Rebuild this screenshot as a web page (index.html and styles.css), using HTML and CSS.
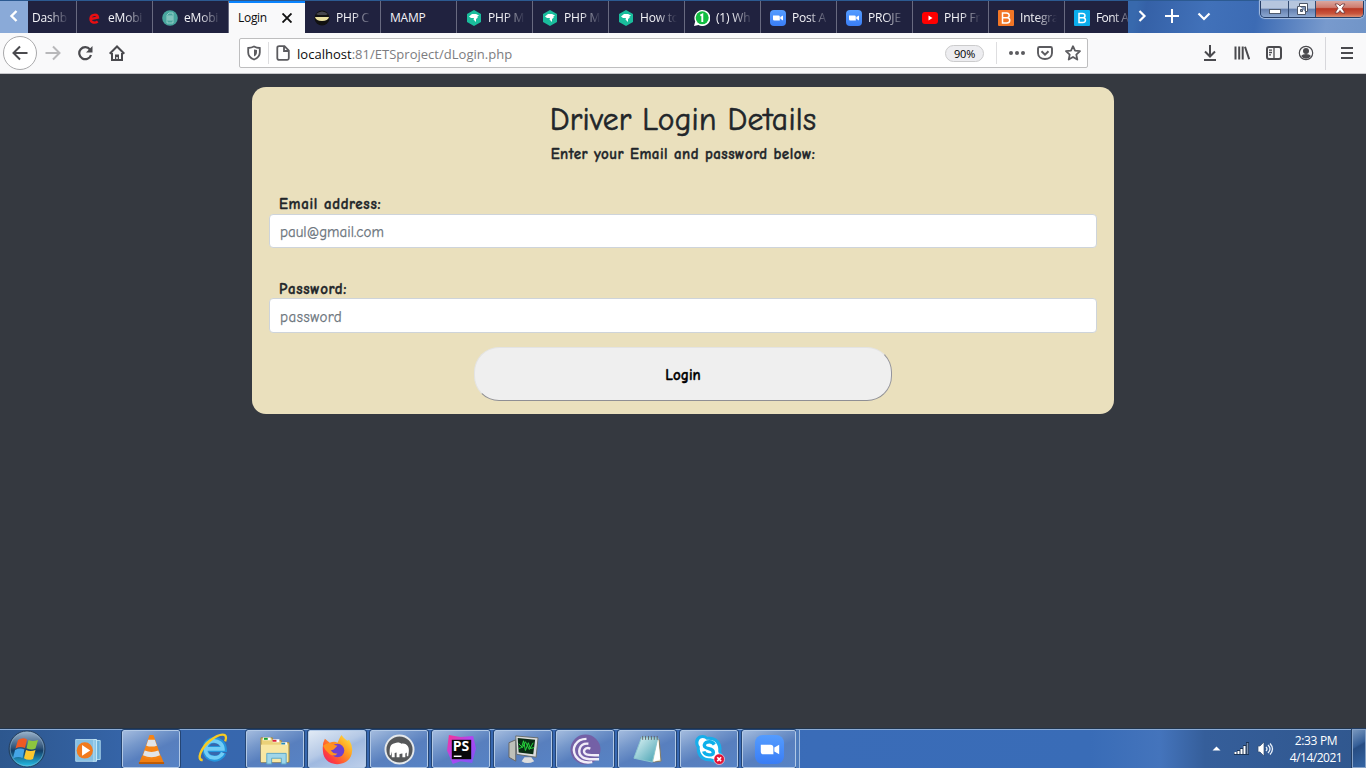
FILE: index.html
```html
<!DOCTYPE html>
<html lang="en">
<head>
<meta charset="utf-8">
<title>Login</title>
<link rel="stylesheet" href="styles.css">
</head>
<body>
<svg class="defs" width="0" height="0">
  <defs>
    <linearGradient id="zoomg" x2="0" y2="1"><stop stop-color="#549cff"/><stop offset="1" stop-color="#3a7df5"/></linearGradient>
    <linearGradient id="orb" x2="0" y2="1"><stop stop-color="#9db5cc"/><stop offset=".45" stop-color="#34577c"/><stop offset=".55" stop-color="#123e68"/><stop offset="1" stop-color="#25c5ec"/></linearGradient>
    <linearGradient id="fox" x1="1" x2="0" y2="1"><stop stop-color="#fff04a"/><stop offset=".4" stop-color="#ff9a1f"/><stop offset=".75" stop-color="#ff403d"/><stop offset="1" stop-color="#e2187d"/></linearGradient>
    <linearGradient id="psg" x2="1" y2="1"><stop stop-color="#ff318c"/><stop offset=".45" stop-color="#b345f1"/><stop offset="1" stop-color="#765af8"/></linearGradient>
    <linearGradient id="note" x2="1" y2="1"><stop stop-color="#e4f7f8"/><stop offset="1" stop-color="#429fb0"/></linearGradient>
    <symbol id="hex" viewBox="0 0 16 16"><path d="M8 0l7 4v8l-7 4-7-4V4z" fill="#1abc9c"/><path d="M3 6.500l3-2.500h4l3 1.500-2 1.500 1 .5-2 1.500v3L7.500 9.500 8 8H5z" fill="#fff"/></symbol>
    <symbol id="zoomi" viewBox="0 0 16 16"><rect width="16" height="16" rx="4" fill="url(#zoomg)"/><path d="M3 5.500h5.500q1.300 0 1.300 1.200v3.800H4.300Q3 10.500 3 9.300zM10.300 7.100L13 5.400v5.100l-2.700-1.700z" fill="#fff"/></symbol>
  </defs>
</svg>
<header class="tabbar">
  <div class="scroll-left"><svg width="10" height="14" viewBox="0 0 10 14"><path d="M7.500 2L2.500 7l5 5" fill="none" stroke="#fff" stroke-width="2.400"/></svg></div>
  <nav class="tabs">
    <div class="tab first"><span class="fade">Dashb</span></div>
    <div class="tab"><svg class="fav" viewBox="0 0 16 16"><path d="M4.500 9L12 7.600C11.500 3.500 4.700 4 4.500 8.700c0 4.600 5 4.600 7.200 2.800" fill="none" stroke="#e80e12" stroke-width="2.400"/></svg><span class="fade">eMobi</span></div>
    <div class="tab"><svg class="fav" viewBox="0 0 16 16"><circle cx="8" cy="8" r="7.800" fill="#48a59d"/><path d="M5 13V5l2-2h4v10zM7 5v6m2-6v6M5 7h6m-6 2h6" fill="none" stroke="#9bd0ca" stroke-width=".9"/></svg><span class="fade">eMobi</span></div>
    <div class="tab active"><span>Login</span><svg width="10" height="10" viewBox="0 0 10 10"><path d="M.5.5l9 9m0-9l-9 9" stroke="#111" stroke-width="1.900"/></svg></div>
    <div class="tab"><svg class="fav" viewBox="0 0 16 16"><circle cx="8" cy="8" r="7.500" fill="#111"/><path d="M2 4Q8-1 14 4L12 5H4z" fill="#45454c"/><path d="M1 7h14q-1 4-7 4T1 7z" fill="#e9dfa0"/></svg><span class="fade">PHP C</span></div>
    <div class="tab"><span class="plain">MAMP</span></div>
    <div class="tab"><svg class="fav"><use href="#hex"/></svg><span class="fade">PHP M</span></div>
    <div class="tab"><svg class="fav"><use href="#hex"/></svg><span class="fade">PHP M</span></div>
    <div class="tab"><svg class="fav"><use href="#hex"/></svg><span class="fade">How to</span></div>
    <div class="tab"><svg class="fav" viewBox="0 0 16 16"><path d="M0 16l1.200-4.500A8 8 0 1 1 4.500 15z" fill="#fff"/><circle cx="8.200" cy="7.800" r="6.500" fill="#12bd41"/><path d="M6.300 5.500l2-1V12" fill="none" stroke="#fff" stroke-width="1.900"/></svg><span class="fade">(1) Wh</span></div>
    <div class="tab"><svg class="fav"><use href="#zoomi"/></svg><span class="fade">Post A</span></div>
    <div class="tab"><svg class="fav"><use href="#zoomi"/></svg><span class="fade">PROJE</span></div>
    <div class="tab"><svg class="fav" viewBox="0 0 16 16"><rect y="2" width="16" height="12" rx="3" fill="#f00"/><path d="M6.500 5.500v5l4-2.500z" fill="#fff"/></svg><span class="fade">PHP Fr</span></div>
    <div class="tab"><svg class="fav" viewBox="0 0 16 16"><rect width="16" height="16" rx="1" fill="#f37626"/><path d="M4.500 3v10h4.200c4 0 4-5 .4-5.200C12 7.500 12 3 8.500 3zM4.500 7.800H9" fill="none" stroke="#fff" stroke-width="1.500"/></svg><span class="fade">Integra</span></div>
    <div class="tab last"><svg class="fav" viewBox="0 0 16 16"><rect width="16" height="16" rx="1" fill="#0badec"/><path d="M5 3.500v9h3.700c3.600 0 3.600-4.500.4-4.700 2.600-.3 2.600-4.300-.6-4.300zM5 7.800h4" fill="none" stroke="#fff" stroke-width="1.500"/></svg><span class="fade">Font A</span></div>
  </nav>
  <div class="tab-tools">
    <svg width="10" height="14" viewBox="0 0 10 14"><path d="M2.500 2l5 5-5 5" fill="none" stroke="#fff" stroke-width="2.200"/></svg>
    <svg width="14" height="14" viewBox="0 0 14 14"><path d="M7 0v14M0 7h14" stroke="#fff" stroke-width="2"/></svg>
    <svg width="14" height="14" viewBox="0 0 14 14"><path d="M1.500 4.500L7 10l5.500-5.500" fill="none" stroke="#fff" stroke-width="2.200"/></svg>
  </div>
  <div class="winbtns">
    <div class="wb"><svg width="14" height="14"><rect x="1.500" y="7.500" width="11" height="4" fill="#fff" stroke="#505c6e"/></svg></div>
    <div class="wb mid"><svg width="14" height="14"><path d="M4.500 1.500h8v8h-2v3h-8v-8h2z" fill="#fff" stroke="#4c5667"/><path d="M5.500 7.500h2v2h-2zM5 4.500h5.500V10" fill="#8194b5" stroke="#4c5667"/></svg></div>
    <div class="wb close"><svg width="14" height="14"><path d="M2 2h3l2 2 2-2h3L9 6.300 12 11H9L7 8.500 5 11H2l3-4.700z" fill="#fff" stroke="#6b3638" stroke-width=".8"/></svg></div>
  </div>
</header>
<div class="toolbar">
  <div class="back"><svg width="16" height="16" viewBox="0 0 16 16"><path d="M15.500 8H1.500M8 1.500L1.500 8 8 14.500" fill="none" stroke="#4a4a4e" stroke-width="2"/></svg></div>
  <svg class="ic fwd" viewBox="0 0 16 16"><path d="M.5 8h14M8 1.500L14.500 8 8 14.500" fill="none" stroke="#b8b8ba" stroke-width="2"/></svg>
  <svg class="ic reload" viewBox="0 0 16 16"><path d="M13 4.500A6 6 0 1 0 14 10" fill="none" stroke="#4a4a4e" stroke-width="2.200"/><path d="M15.500 1v6.500H9z" fill="#4a4a4e"/></svg>
  <svg class="ic home" viewBox="0 0 16 16"><path d="M.7 8.700L8 1.500l7.300 7.200M3 8v7h10V8" fill="none" stroke="#4a4a4e" stroke-width="2"/><path d="M6 15V9.500h4V15H8.700v-3H7.300v3z" fill="#4a4a4e"/></svg>
  <div class="urlbar">
    <svg class="shield" viewBox="0 0 14 16"><path d="M7 1.500C5 2.600 3 2.900 1.200 3v4.500c0 3.500 2 5.500 5.800 7 3.800-1.500 5.800-3.500 5.800-7V3C11 2.900 9 2.600 7 1.500z" fill="none" stroke="#5b5b5f" stroke-width="1.800"/><path d="M7 4.500v7c2-1 3-2.300 3-4.500V5z" fill="#5b5b5f"/></svg>
    <i class="sep s1"></i>
    <svg class="doc" viewBox="0 0 14 16"><path d="M3.200 1.200H8.500l4.300 4.300v7.800q0 1.500-1.500 1.500h-8q-2 0-2-1.500V2.700q0-1.500 1.900-1.500zM8 1v5h5" fill="none" stroke="#5b5b5f" stroke-width="1.800"/></svg>
    <span class="url"><b>localhost</b>:81/ETSproject/dLogin.php</span>
    <span class="pct">90%</span>
    <i class="sep s2"></i>
    <svg class="dots" viewBox="0 0 16 16"><g fill="#5b5b5f"><circle cx="2" cy="8" r="2"/><circle cx="8" cy="8" r="2"/><circle cx="14" cy="8" r="2"/></g></svg>
    <svg class="ub" viewBox="0 0 16 16"><path d="M2.500 2h11Q15 2 15 3.500V8c0 8-14 8-14 0V3.500Q1 2 2.500 2z" fill="none" stroke="#5b5b5f" stroke-width="1.900"/><path d="M4.500 6.300L8 9.700l3.500-3.400" fill="none" stroke="#5b5b5f" stroke-width="2"/></svg>
    <svg class="ub" viewBox="0 0 16 16"><path d="M8 1.200l2 4.500 5 .5-3.700 3.400 1 5L8 12l-4.300 2.600 1-5L1 6.200l5-.5z" fill="none" stroke="#5b5b5f" stroke-width="1.800" stroke-linejoin="round"/></svg>
  </div>
  <div class="right">
    <svg class="ic" viewBox="0 0 16 16"><path d="M8 0v11M3 6.500l5 5 5-5M2 15h12" fill="none" stroke="#4a4a4e" stroke-width="2"/></svg>
    <svg class="ic" viewBox="0 0 16 16"><path d="M1.500 1.500v13M5.200 1.500v13M8.700 1.500v13M11 1.800l4.200 12.500" fill="none" stroke="#4a4a4e" stroke-width="2"/></svg>
    <svg class="ic" viewBox="0 0 16 16"><rect x="1" y="2" width="14" height="12" rx="2" fill="none" stroke="#4a4a4e" stroke-width="2"/><path d="M8 2v12M3 5.200h3M3 7.500h3M3 9.800h2" stroke="#4a4a4e" stroke-width="1.300"/></svg>
    <svg class="ic" viewBox="0 0 16 16"><circle cx="8" cy="8" r="6.700" fill="none" stroke="#4a4a4e" stroke-width="1.200"/><circle cx="8" cy="6" r="3" fill="#4a4a4e"/><path d="M3 11q1.500-2 5-2t5 2q-2 2.700-5 2.700T3 11z" fill="#4a4a4e"/></svg>
    <i class="rsep"></i>
    <svg class="ic menu" viewBox="0 0 16 16"><path d="M2 3h12M2 8h12M2 13h12" stroke="#4a4a4e" stroke-width="2"/></svg>
  </div>
</div>
<main class="page">
  <form class="card">
    <h1>Driver Login Details</h1>
    <p class="sub">Enter your Email and password below:</p>
    <label class="l-email" for="em">Email address:</label>
    <input id="em" class="i-email" type="email" placeholder="paul@gmail.com">
    <label class="l-pass" for="pw">Password:</label>
    <input id="pw" class="i-pass" type="password" placeholder="password">
    <button type="button">Login</button>
  </form>
</main>
<footer class="taskbar">
  <div class="start"><svg width="38" height="38" viewBox="0 0 38 38"><circle cx="19" cy="19" r="18" fill="url(#orb)" stroke="#263f5c"/><circle cx="19" cy="19" r="16.800" fill="none" stroke="#8fb2cf" stroke-opacity=".55"/><path d="M10 10q5-3 9-.5l-2 8.500q-5-2-9.500.5z" fill="#ee5a24"/><path d="M20.500 10q4 2 9.500 0l-2.500 8.500q-4 2-9-.3z" fill="#8cc63f"/><path d="M7 20q5-2.500 9.500-.5l-2 8.500Q10 26 5 28.500z" fill="#45a5e6"/><path d="M18 20q4.500 2 9.500 0l-2.500 9q-5 2-9-.7z" fill="#fcc72e"/></svg></div>
  <div class="task flat wmp"><svg class="ti" viewBox="0 0 32 32"><path d="M25 6h5v21h-5z" fill="#6cb0d9" stroke="#b8e1f4"/><path d="M22 5h4v24h-4z" fill="#8ac5e6" stroke="#d2effa"/><path d="M3 5h20v24H3z" fill="#85bfe2" stroke="#b7dcef"/><circle cx="13" cy="17" r="9" fill="#f17a1d"/><path d="M10 11v12l9-6z" fill="#fff"/></svg></div>
  <div class="task"><svg class="ti" viewBox="0 0 32 32"><path d="M6 23h20l3 7.500H3z" fill="#f07f13"/><path d="M14 1h4l8 23q-10 4.500-20 0z" fill="#f68415"/><path d="M12.600 6h6.800l2.200 6q-5.500 2-11 0zM9 17q7 3 14 0l1.800 5q-9 4-17.600 0z" fill="#e2e5e8"/><path d="M3 30h26" stroke="#bd5a05" stroke-width="2"/></svg></div>
  <div class="task flat ie"><svg class="ti" viewBox="0 0 32 32"><path d="M8 17h19.500C27 5 8 4 8 17c0 13 16 13 19 4" fill="none" stroke="#2495dd" stroke-width="6.500"/><path d="M8 17h18.500C26 6 8 5 8 17c0 11.500 15 12 18.500 4" fill="none" stroke="#71cdf6" stroke-width="4"/><path d="M5 29C-2 29 3 16 13 8s20-9 16 1" fill="none" stroke="#f7cb22" stroke-width="2.500"/></svg></div>
  <div class="task"><svg class="ti" viewBox="0 0 32 32"><path d="M1 4h12v3h9v2h8v20H1z" fill="#ead179" stroke="#a98a38"/><path d="M3 5h8M13 7h7M22 10h6" stroke="#fff" stroke-width="3"/><path d="M4 5h4" stroke="#1aa12c" stroke-width="2"/><path d="M13 7h4" stroke="#d23" stroke-width="2"/><path d="M22 10h4" stroke="#28b" stroke-width="2"/><path d="M1 11h28v18H1z" fill="#f8e7a3"/><path d="M7 20h20v11h-5v-6H12v6H7z" fill="#9fd6ea" stroke="#5ba7c8"/></svg></div>
  <div class="task lit"><svg class="ti" viewBox="0 0 32 32"><path d="M3 5l5 4q5-2 8 0 2-5 4-8 2 3 6 6l2-1q4 7 3 12c-1 17-29 18-30 0Q0 10 3 5z" fill="url(#fox)"/><circle cx="16" cy="17" r="7" fill="#6c41d0"/><path d="M1 12q6-5 11-1l4 1-4 4-3 1q3 4 7 3-3 4-8 1-5-4-7-9z" fill="#ff9220"/></svg></div>
  <div class="task"><svg class="ti" viewBox="0 0 32 32"><circle cx="16" cy="16" r="14.500" fill="#555759" stroke="#e4e8eb" stroke-width="2"/><path d="M6 22c-.5-7 0-12 5-12.500 3-1.500 6-.5 7 .5 6-1 8.500 4 7.500 9l-.5 4h-1.500v-4l-1.500 1v4h-3v-4q-2 0-3 1v3h-3v-5l-2 .5v4.500H8v-6l-1 4z" fill="#fff"/></svg></div>
  <div class="task"><svg class="ti" viewBox="0 0 32 32"><path d="M3 1l12 2L28 2l3 13-4 15-12-2-8 3L1 17z" fill="url(#psg)"/><rect x="6" y="6" width="20" height="20" fill="#080808"/><text x="7" y="17.500" class="ps" textLength="17" lengthAdjust="spacingAndGlyphs">PS</text><path d="M8 23h8" stroke="#fff" stroke-width="1.500"/></svg></div>
  <div class="task"><svg class="ti" viewBox="0 0 32 32"><path d="M1 9l7-3v22l-7-4z" fill="#bfc1b9" stroke="#666"/><path d="M8 2l23 2-2 20-20-3z" fill="#ddd" stroke="#696e6b"/><path d="M10 4l18 2-2 15-15-2z" fill="#092c14"/><path d="M11 15l3-1 2-7 2 10 3-8 2 6 4-1M11 10l4 4 3-6 4 8 4-7" fill="none" stroke="#27d83c"/><path d="M17 24h7l3 4q-7 4-13 0z" fill="#ddd"/></svg></div>
  <div class="task"><svg class="ti" viewBox="0 0 32 32"><circle cx="16" cy="16" r="15.500" fill="#7460a6"/><g fill="none" stroke="#f2eef9" stroke-width="2.500"><path d="M17 5C6 5 1 15 6 23c4 6 11 7 17 6"/><path d="M19 10C9 9 7 20 13 24c4 3 11 2 17 2"/><path d="M21 15c-6-2-9 4-4 6 4 1 9 1 13 1"/></g></svg></div>
  <div class="task"><svg class="ti" viewBox="0 0 32 32"><path d="M9 4l19 2 2 22-8 1z" fill="#eee8ca" stroke="#827b64"/><path d="M10 3l17 1-6 25-19-4z" fill="url(#note)" stroke="#8bc6cf"/><path d="M27 5l-5 24 7-3z" fill="#fff"/><path d="M11 2v4m3-4v4m3-4v4m3-4v4m3-4v4m3-4v4" stroke="#626568"/></svg></div>
  <div class="task"><svg class="ti" viewBox="0 0 32 32"><path d="M9 1q3 0 5 2c10-1 16 7 14 15 4 8-4 14-11 10C8 29 2 22 3 14-1 8 2 1 9 1z" fill="#18aeea"/><path d="M9 4c2 0 3 1 4 2 8-1 13 4 12 12 3 7-3 9-8 7-6 1-12-4-11-12-3-4-1-9 3-9z" fill="#fff"/><path d="M21 11c-3-5-12-3-10 2 2 3 9 1 9 6 0 4-9 3-10-1" fill="none" stroke="#0db0ea" stroke-width="3.500"/><circle cx="26" cy="26" r="5.500" fill="#e21235" stroke="#fff" stroke-width=".6"/><path d="M24 24l4 4m0-4l-4 4" stroke="#fff" stroke-width="1.700"/></svg></div>
  <div class="task zoomtask"><svg class="ti" viewBox="0 0 32 32"><rect x="1" y="1" width="30" height="30" rx="8" fill="url(#zoomg)"/><path d="M7 11h10q3 0 3 3v7H10q-3 0-3-3zM21 14l5-3v10l-5-3z" fill="#fff"/></svg></div>
  <div class="stack"></div>
  <div class="tray">
    <svg width="9" height="5" viewBox="0 0 9 5"><path d="M.5 4.500L4.500.5l4 4z" fill="#fff"/></svg>
    <svg class="signal" width="17" height="14" viewBox="0 0 17 14"><path d="M1 10h3V8h3V6h3V3h3V0h3v13H1z" fill="#1c3557"/><path d="M2.500 10v2M5.500 9v3M8.500 7v5M11.500 4v8" stroke="#fff" stroke-width="2"/><path d="M14.500 1v11" stroke="#7c91ae" stroke-width="1.500"/></svg>
    <svg class="speaker" width="17" height="16" viewBox="0 0 17 16"><path d="M1 5h2l4-4v14l-4-4H1z" fill="#fff" stroke="#304c70" stroke-width=".7"/><path d="M9 6q2 2 0 4M11 4q4 4 0 8M13 2.500q5 5.500 0 11" fill="none" stroke="#e8f0fa" stroke-width="1.300"/></svg>
    <div class="clock"><span class="time">2:33 PM</span><span class="date">4/14/2021</span></div>
  </div>
  <div class="peek"></div>
</footer>
</body>
</html>
```

FILE: styles.css
```css
* { box-sizing: border-box; }
body { margin: 0; width: 1366px; height: 768px; overflow: hidden; display: flex; flex-direction: column; background: #353940; font-family: "Segoe UI", "Open Sans", "Noto Sans", sans-serif; font-size: 12px; }
svg { display: block; flex: none; }
.defs { position: absolute; }
.tabbar { height: 33px; flex: none; display: flex; background: linear-gradient(100deg, transparent 0 1120px, #3561a7 1130px, #4171b9 1190px, #3c6bb4 1240px, #789acd 1310px, #7195c8), #3869ad; border-top: 1px solid #2c5a91; }
.scroll-left { width: 28px; flex: none; background: #8aaad8; display: flex; align-items: center; justify-content: center; padding-bottom: 2px; }
.tabs { width: 1100px; flex: none; display: flex; color: #f4f4f8; letter-spacing: -.2px; }
.tab { width: 76px; flex: none; height: 32px; background: #20223f; border-right: 1px solid #686a80; display: flex; align-items: center; gap: 6px; padding: 1px 0 0 9px; overflow: hidden; }
.tab.first { width: 49px; padding-left: 4px; }
.tab.last { width: 63px; border: 0; }
.tab .fav { width: 16px; height: 16px; margin-top: 1px; }
.fade { width: 40px; white-space: nowrap; -webkit-mask-image: linear-gradient(90deg, #000 16px, transparent 37px); mask-image: linear-gradient(90deg, #000 16px, transparent 37px); }
.tab.last .fade { width: 32px; letter-spacing: -.6px; }
.tab.active { background: #f9f9fa; color: #0c0c0d; border: 0; border-top: 2px solid #0a84ff; padding: 0 0 2px 9px; gap: 14px; }
.tab.active span { width: 30px; letter-spacing: -.3px; }
.tab.active svg { margin-top: 2px; }
.tab-tools { width: 132px; flex: none; display: flex; align-items: center; padding: 0 0 2px 9px; gap: 18px; }
.winbtns { display: flex; height: 17px; width: 104px; flex: none; border: 1px solid #263e66; border-top: 0; border-radius: 0 0 5px 5px; overflow: hidden; box-shadow: 0 0 1px 1px #a9c0e1; }
.wb { width: 28px; display: flex; align-items: center; justify-content: center; background: linear-gradient(#b6c6de 0 45%, #647fae 50%, #8ca8d1); border-right: 1px solid #324a70; }
.mid { width: 27px; }
.close { width: 47px; border: 0; background: linear-gradient(#daa69e 0, #cf7d70 40%, #b93724 48%, #c9563d 80%, #dd9275); }
.toolbar { height: 41px; flex: none; background: #f9f9fa; border-bottom: 1px solid #c6c6ca; display: flex; align-items: center; padding-left: 3px; }
.back { width: 34px; height: 34px; flex: none; border: 1px solid #a9a9ab; border-radius: 50%; background: #fff; display: flex; align-items: center; justify-content: center; }
.ic { width: 16px; height: 16px; }
.fwd { margin-left: 8px; }
.reload { margin-left: 16px; }
.home { margin-left: 16px; }
.urlbar { width: 849px; height: 30px; margin-left: 114px; flex: none; border: 1px solid #bebebf; border-radius: 2px; background: #fff; display: flex; align-items: center; }
.shield { width: 14px; height: 16px; margin-left: 7px; }
.sep { width: 1px; height: 22px; background: #dedee0; }
.s1 { margin: 0 7px; }
.doc { width: 14px; height: 16px; }
.url { margin: 1px 0 0 7px; color: #7c7c80; font-size: 13px; letter-spacing: .02px; white-space: nowrap; }
.url b { font-weight: 400; color: #0c0c0d; }
.pct { margin-left: auto; width: 39px; height: 17px; border: 1px solid #cbcbcc; border-radius: 9px; background: #ededf0; font-size: 11px; line-height: 16px; text-align: center; letter-spacing: -.2px; }
.s2 { margin: 0 12px; }
.dots { width: 16px; height: 16px; margin-right: 12px; }
.ub { width: 16px; height: 16px; margin-right: 12px; }
.ub:last-child { margin-right: 6px; }
.right { margin-left: 114px; display: flex; align-items: center; gap: 16px; }
.rsep { width: 1px; height: 33px; background: #d7d7db; margin: 0 -4px 0 -5px; }
.menu { margin-left: 1px; }
.page { flex: 1; padding: 13px 252px 0; background: #353940; }
.card { height: 327px; border-radius: 14px; background: #eae0bd; padding: 15px 17px 0; display: flex; flex-direction: column; color: #212529; font-family: "Comic Sans MS", "Comic Neue", "Open Sans", sans-serif; }
.card h1 { margin: 0; font-size: 31.500px; font-weight: 400; line-height: 36px; text-align: center; letter-spacing: .25px; -webkit-text-stroke: .6px; }
.sub { margin: 5px 0 1px; font-size: 15px; line-height: 22px; font-weight: 700; text-align: center; white-space: nowrap; letter-spacing: .5px; -webkit-text-stroke: .35px; }
.card label { font-size: 15px; line-height: 22px; font-weight: 700; padding-left: 10px; letter-spacing: .65px; -webkit-text-stroke: .35px; }
.l-email { margin: 27px 0 -1px; }
.l-pass { margin: 30px 0 -2px; }
.card input { width: 828px; height: 34px; border: 1px solid #ced4da; border-radius: 4px; background: #fff; padding: 3px 10px 1px; font-family: inherit; font-size: 15px; color: #495057; outline: 0; }
.card .i-pass { height: 35px; letter-spacing: .5px; }
.card input::placeholder { color: #6c757d; opacity: 1; -webkit-text-stroke: .25px; }
.card button { align-self: center; flex: none; width: 418px; height: 54px; margin-top: 14px; padding: 1px 0 0; border: 1px solid; border-color: #e3e3e3 #94949c #8f8f94 #e3e3e3; border-radius: 25px; background: #efefef; color: #000; font: 700 15px "Comic Sans MS", "Comic Neue", "Open Sans", sans-serif; -webkit-text-stroke: .35px; }
.taskbar { height: 40px; flex: none; display: flex; border-top: 1px solid #20344d; box-shadow: inset 0 1px #89aad5; background: linear-gradient(90deg, #2d578e 0, #3767ad 150px, #3767b0 500px, #3a6cb8 810px, #396cb7 1090px, #4474bc 1160px, #355e9a 1205px, #30578e 1366px); }
.start { width: 56px; flex: none; padding: 1px 0 0 8px; margin-right: 3px; }
.task { width: 58px; height: 38px; margin: 1px 3px 0 1px; flex: none; border: 1px solid #b2c9e6; outline: 1px solid #244574; border-radius: 2px; background: linear-gradient(155deg, #a3bbde 0, #7698cb 30%, #587fbe 55%, #5783c5); display: flex; justify-content: center; align-items: center; }
.task.flat { border-color: transparent; outline: 0; background: none; }
.task.lit { background: linear-gradient(155deg, #e1eaf5, #b5c9e6 45%, #9fb9e0 55%, #bdcfea); }
.ti { width: 31px; height: 31px; }
.wmp .ti { width: 29px; height: 29px; margin-right: 4px; }
.ie .ti { width: 30px; height: 30px; margin-bottom: 3px; }
.ps { font: 700 14px "Open Sans", sans-serif; fill: #fff; }
.zoomtask { width: 54px; margin-right: 0; }
.stack { width: 4px; height: 38px; margin-top: 1px; border-right: 1px solid #9ebadf; background: #4e7bbb; }
.tray { margin-left: auto; display: flex; align-items: center; color: #fff; }
.signal { margin-left: 12px; }
.speaker { margin-left: 7px; }
.clock { width: 64px; margin: 1px 4px 0 10px; display: flex; flex-direction: column; align-items: center; line-height: 17px; letter-spacing: -.35px; }
.date { letter-spacing: -.5px; }
.peek { width: 14px; height: 39px; border: 1px solid #87a3c8; outline: 1px solid #223d63; background: linear-gradient(150deg, #7796bd, #365f98 40%, #274d83 45%, #3565a4); }
```
